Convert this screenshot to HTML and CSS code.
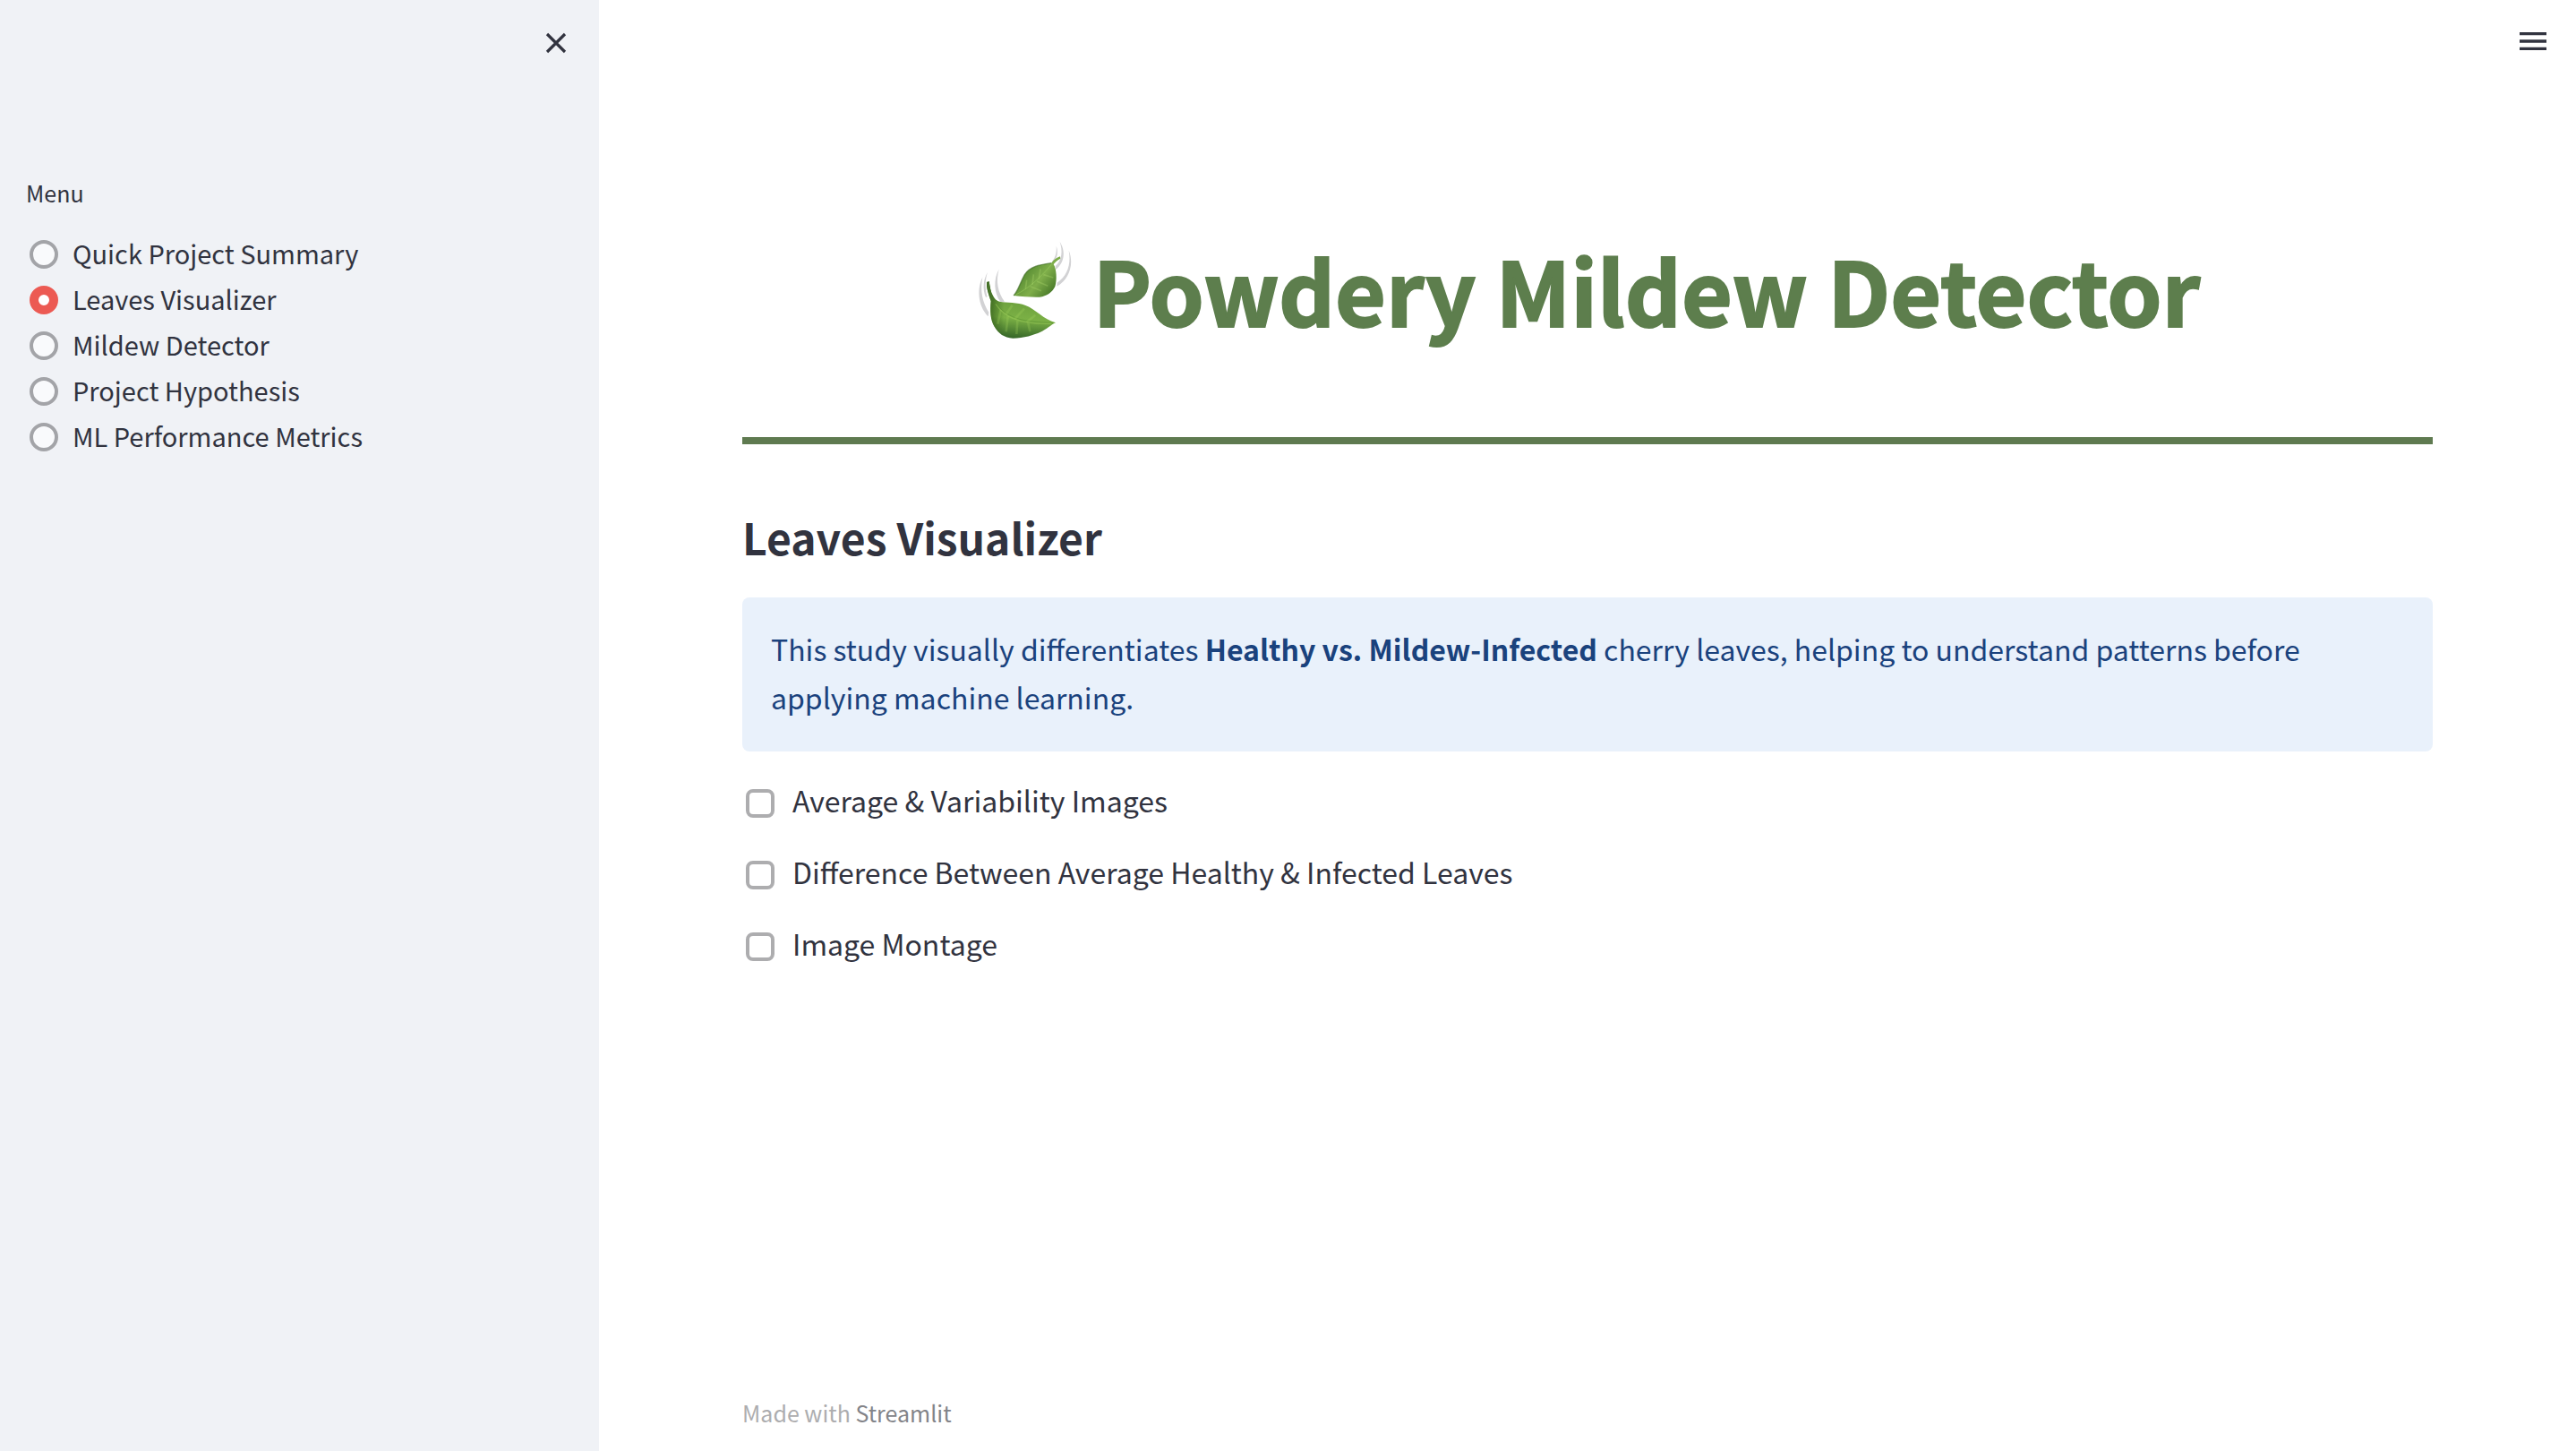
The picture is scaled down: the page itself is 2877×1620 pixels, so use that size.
FILE: index.html
```html
<!DOCTYPE html>
<html lang="en">
<head>
<meta charset="utf-8">
<meta name="viewport" content="width=device-width, initial-scale=1">
<title>Powdery Mildew Detector</title>
<link rel="stylesheet" href="styles.css">
</head>
<body>
<div class="app">
  <aside class="sidebar">
    <div class="sidebar-top">
      <button class="icon-button" type="button" aria-label="Close sidebar">
        <svg class="icon" viewBox="0 0 32 32" aria-hidden="true"><path d="M6 6 26 26M26 6 6 26" fill="none" stroke="currentColor" stroke-width="3.2"/></svg>
      </button>
    </div>
    <fieldset class="menu">
      <legend class="menu-title">Menu</legend>
      <label class="menu-item"><input class="radio" type="radio" name="page"><span>Quick Project Summary</span></label>
      <label class="menu-item"><input class="radio" type="radio" name="page" checked><span>Leaves Visualizer</span></label>
      <label class="menu-item"><input class="radio" type="radio" name="page"><span>Mildew Detector</span></label>
      <label class="menu-item"><input class="radio" type="radio" name="page"><span>Project Hypothesis</span></label>
      <label class="menu-item"><input class="radio" type="radio" name="page"><span>ML Performance Metrics</span></label>
    </fieldset>
  </aside>
  <div class="page">
    <header class="toolbar">
      <button class="icon-button" type="button" aria-label="Main menu">
        <svg class="icon" viewBox="0 0 32 32" aria-hidden="true"><path d="M1 6h30v3.3H1zM1 14.3h30v3.4H1zM1 22.7h30v3.3H1z" fill="currentColor"/></svg>
      </button>
    </header>
    <main class="content">
      <h1 class="title">
        <svg class="leaves" viewBox="15 15 330 345" role="img" aria-label="Leaves fluttering in wind">
          <defs>
            <linearGradient id="upper" x1="0" y1="0" x2="1" y2="0.7">
              <stop offset="0" stop-color="#45702a"/><stop offset="0.35" stop-color="#5b8f35"/><stop offset="0.65" stop-color="#7fae4a"/><stop offset="1" stop-color="#457627"/>
            </linearGradient>
            <linearGradient id="lower" x1="0.5" y1="0" x2="0.4" y2="1">
              <stop offset="0" stop-color="#4d8130"/><stop offset="0.3" stop-color="#6b9f3c"/><stop offset="0.65" stop-color="#7bb045"/><stop offset="1" stop-color="#356628"/>
            </linearGradient>
            <linearGradient id="edge" x1="0" y1="0" x2="1" y2="0">
              <stop offset="0" stop-color="#2f5a18" stop-opacity="0.9"/><stop offset="0.25" stop-color="#2f5a18" stop-opacity="0"/>
            </linearGradient>
          </defs>
          <g fill="#d2d2d4">
            <path d="M40 149C22 182 22 242 59 280L61 266C40 232 31 194 40 149Z"/>
            <path d="M57 132C43 154 39 188 51 216L56 214C48 188 48 158 57 132Z"/>
            <path d="M95 122C76 154 78 202 100 231L114 230C91 198 84 162 95 122Z"/>
            <path d="M287 44C289 65 284 83 273 95L280 96C291 82 294 62 287 44Z"/>
            <path d="M299 30C317 58 318 96 286 123L284 112C307 90 309 61 299 30Z"/>
            <path d="M329 59C348 104 330 158 289 179L290 167C326 143 337 104 329 59Z"/>
          </g>
          <path d="M144 210C158 197 164 171 181 140C199 112 230 107 270 101C281 88 290 82 300 79L301 86C292 90 284 97 278 105C288 121 290 157 283 180C273 200 255 212 231 215C204 216 175 213 144 210Z" fill="url(#upper)"/>
          <path d="M150 208C195 185 232 153 272 104" fill="none" stroke="#9acb5d" stroke-opacity="0.6" stroke-width="3"/>
          <path d="M184 188 188 158M207 174 211 139M229 155 234 121M200 179 237 194M222 162 259 178M244 140 277 150" fill="none" stroke="#a9d46b" stroke-opacity="0.35" stroke-width="5"/>
          <path d="M144 210C158 197 164 171 181 140C199 112 230 107 270 101" fill="none" stroke="#36631b" stroke-opacity="0.6" stroke-width="4"/>
          <path d="M54 165 62 163C65 181 67 198 75 211C80 221 87 228 96 230C121 235 158 231 184 243C218 255 244 290 285 301C267 309 256 323 234 332C214 341 177 353 142 353C112 351 94 337 80 314C66 293 65 259 68 229C60 204 53 187 54 165Z" fill="url(#lower)"/>
          <path d="M54 165 62 163C65 181 67 198 75 211C80 221 87 228 96 230C121 235 158 231 184 243C218 255 244 290 285 301C267 309 256 323 234 332C214 341 177 353 142 353C112 351 94 337 80 314C66 293 65 259 68 229C60 204 53 187 54 165Z" fill="url(#edge)"/>
          <path d="M82 233C112 274 157 302 278 301" fill="none" stroke="#4f8a29" stroke-opacity="0.4" stroke-width="3"/>
          <path d="M84 238C112 280 157 307 270 304" fill="none" stroke="#a6d55e" stroke-opacity="0.4" stroke-width="4"/>
          <path d="M101 258 91 305M125 279 119 331M157 294 154 339M193 302 199 331M119 272 140 242M148 288 180 254M188 299 217 275" fill="none" stroke="#a9d65f" stroke-opacity="0.25" stroke-width="8"/>
          <path d="M58 166C61 187 65 208 77 227" fill="none" stroke="#48742a" stroke-width="7"/>
        </svg>
        <span>Powdery Mildew Detector</span>
      </h1>
      <hr class="rule">
      <h2 class="heading">Leaves Visualizer</h2>
      <p class="notice">This study visually differentiates <strong>Healthy vs. Mildew-Infected</strong> cherry leaves, helping to understand patterns before applying machine learning.</p>
      <div class="options">
        <label class="option"><input class="checkbox" type="checkbox"><span>Average &amp; Variability Images</span></label>
        <label class="option"><input class="checkbox" type="checkbox"><span>Difference Between Average Healthy &amp; Infected Leaves</span></label>
        <label class="option"><input class="checkbox" type="checkbox"><span>Image Montage</span></label>
      </div>
    </main>
    <footer class="footer">Made with <a class="footer-link" href="#">Streamlit</a></footer>
  </div>
</div>
</body>
</html>
```

FILE: styles.css
```css
*, *::before, *::after {
  box-sizing: border-box;
}

body {
  margin: 0;
  background: #fff;
  color: #31333f;
  font-family: "Source Sans Pro", "Noto Sans CJK SC", sans-serif;
  font-size: 32px;
  line-height: 54px;
}

.app {
  display: flex;
  min-height: 100vh;
}

/* Sidebar */

.sidebar {
  flex: 0 0 669px;
  background: #f0f2f6;
}

.sidebar-top,
.toolbar {
  display: flex;
  justify-content: flex-end;
}

.sidebar-top {
  padding: 32px 32px 0;
}

.icon-button {
  display: flex;
  padding: 0;
  border: 0;
  background: none;
  color: #31333f;
  cursor: pointer;
}

.icon {
  width: 32px;
  height: 32px;
}

.menu {
  display: flex;
  flex-direction: column;
  gap: 5px;
  margin: 131px 0 0;
  padding: 0 29px;
  border: 0;
  font-size: 29px;
  line-height: 46px;
}

.menu-title {
  padding: 0 0 24px;
  font-size: 25px;
  line-height: 40px;
}

.menu-item {
  display: flex;
  gap: 16px;
  padding-left: 4px;
}

.radio,
.checkbox {
  flex: none;
  width: 32px;
  height: 32px;
  appearance: none;
  cursor: pointer;
}

.radio {
  margin: 9px 0 0;
  border: 4px solid #a3a4a8;
  border-radius: 50%;
  background: #f9fafc;
}

.radio:checked {
  border: 10px solid #ec5a53;
  background: #fff;
}

/* Page */

.page {
  display: flex;
  flex: 1;
  flex-direction: column;
  min-width: 0;
}

.toolbar {
  padding: 30px 32px 0;
}

.content {
  padding: 200px 160px 0;
}

.title {
  display: flex;
  align-items: center;
  justify-content: center;
  gap: 22px;
  margin: 0;
  color: #5d7e4d;
  font-size: 98px;
  font-weight: 700;
  line-height: 120px;
  -webkit-text-stroke: 2px currentColor;
}

.leaves {
  flex: none;
  width: 110px;
  height: 115px;
}

.rule {
  height: 8px;
  margin: 106px 0 73px;
  border: 0;
  background: #5f7a50;
}

.heading {
  margin: 0 0 38px;
  font-size: 48px;
  font-weight: 700;
  line-height: 60px;
}

.notice {
  margin: 0;
  padding: 30px 32px 34px;
  border-radius: 8px;
  background: #e9f1fb;
  color: #1a427d;
}

.options {
  display: flex;
  flex-direction: column;
  align-items: flex-start;
  gap: 26px;
  margin-top: 27px;
}

.option {
  display: flex;
  gap: 20px;
  padding-left: 4px;
}

.checkbox {
  margin: 15px 0 0;
  border: 4px solid #adadaf;
  border-radius: 8px;
  background: #fff;
}

.footer {
  margin-top: auto;
  padding: 32px 160px 23px;
  color: #adadaf;
  font-size: 25px;
  line-height: 40px;
}

.footer-link {
  color: #838489;
  text-decoration: none;
}
```
